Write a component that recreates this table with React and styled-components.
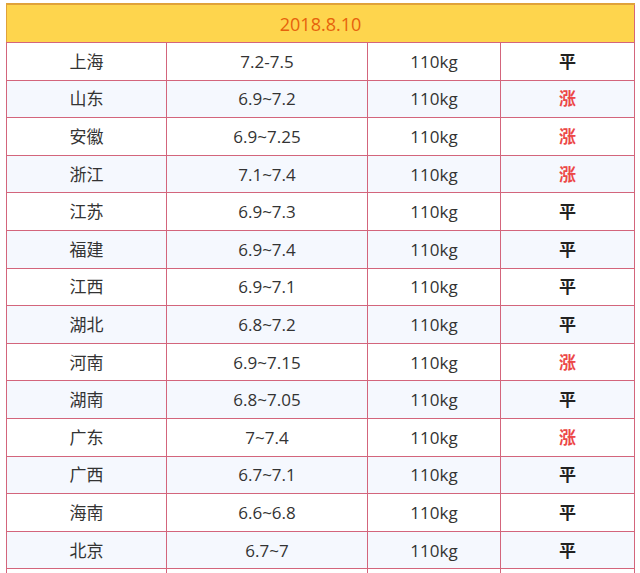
import React from 'react';
import styled, { createGlobalStyle } from 'styled-components';

const GlobalStyle = createGlobalStyle`
    html, body {
        margin: 0;
        padding: 0;
        background: #fff;
        font-family: "Open Sans", "Noto Sans CJK SC", sans-serif;
    }
`;

const Wrap = styled.div`
    width: 640px;
    height: 573px;
    overflow: hidden;
    padding: 3px 0 0 6px;
    box-sizing: border-box;
`;

const PriceTable = styled.table`
    width: 628px;
    border-collapse: collapse;
    table-layout: fixed;
    color: #333;
    font-size: 17px;
`;

const HeadCell = styled.th`
    height: 37px;
    padding: 0;
    background-color: #fed54d;
    border-top: 2px solid #e0a23a;
    border-left: 1px solid #e0a23a;
    border-right: 1px solid #d3657c;
    border-bottom: 1px solid #d3657c;
    color: #e6620c;
    font-weight: 400;
    font-size: 18px;
    text-align: center;
`;

const Row = styled.tr`
    height: 37.6px;
    background-color: ${props => props.$alt ? '#f5f8fe' : '#ffffff'};
`;

const Cell = styled.td`
    padding: 0;
    border: 1px solid #d3657c;
    text-align: center;
    vertical-align: middle;
    line-height: 1;
`;

const Trend = styled.span`
    font-weight: 700;
    color: ${props => props.$up ? '#ec4848' : '#222'};
`;

const data = [
    ['上海', '7.2-7.5', '平'],
    ['山东', '6.9~7.2', '涨'],
    ['安徽', '6.9~7.25', '涨'],
    ['浙江', '7.1~7.4', '涨'],
    ['江苏', '6.9~7.3', '平'],
    ['福建', '6.9~7.4', '平'],
    ['江西', '6.9~7.1', '平'],
    ['湖北', '6.8~7.2', '平'],
    ['河南', '6.9~7.15', '涨'],
    ['湖南', '6.8~7.05', '平'],
    ['广东', '7~7.4', '涨'],
    ['广西', '6.7~7.1', '平'],
    ['海南', '6.6~6.8', '平'],
    ['北京', '6.7~7', '平'],
];

const App = () => {
    return (
        <>
            <GlobalStyle />
            <Wrap>
                <PriceTable>
                    <colgroup>
                        <col width="160" />
                        <col width="201" />
                        <col width="133" />
                        <col width="134" />
                    </colgroup>
                    <thead>
                        <tr>
                            <HeadCell colSpan={4}>2018.8.10</HeadCell>
                        </tr>
                    </thead>
                    <tbody>
                        {data.map((row, i) =>
                            <Row key={row[0]} $alt={i % 2 === 1}>
                                <Cell>{row[0]}</Cell>
                                <Cell>{row[1]}</Cell>
                                <Cell>110kg</Cell>
                                <Cell><Trend $up={row[2] === '涨'}>{row[2]}</Trend></Cell>
                            </Row>
                        )}
                        {/* next row only peeks in at the bottom edge */}
                        <Row $alt={false}>
                            <Cell />
                            <Cell />
                            <Cell />
                            <Cell />
                        </Row>
                    </tbody>
                </PriceTable>
            </Wrap>
        </>
    );
};

export default App;
